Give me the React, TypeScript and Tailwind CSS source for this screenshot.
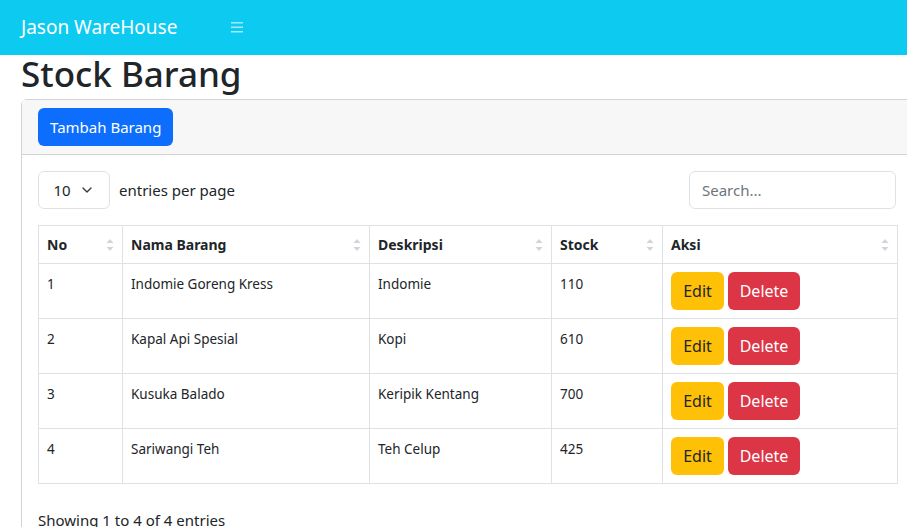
import { ChevronDown } from 'lucide-react';

const rows = [
  { no: 1, nama: 'Indomie Goreng Kress', desk: 'Indomie', stock: 110 },
  { no: 2, nama: 'Kapal Api Spesial', desk: 'Kopi', stock: 610 },
  { no: 3, nama: 'Kusuka Balado', desk: 'Keripik Kentang', stock: 700 },
  { no: 4, nama: 'Sariwangi Teh', desk: 'Teh Celup', stock: 425 },
];

const SortIcon = () => (
  <svg width="8" height="14" viewBox="0 0 8 14" className="shrink-0">
    <path d="M4 1 L7.5 5 L0.5 5 Z" fill="#d1d5db" />
    <path d="M4 13 L7.5 9 L0.5 9 Z" fill="#d1d5db" />
  </svg>
);

const Th = ({ label }: { label: string }) => (
  <th className="border border-[#dee2e6] px-2 h-[38px] text-left text-[14px] font-bold text-[#212529]">
    <div className="flex items-center justify-between">
      <span>{label}</span>
      <SortIcon />
    </div>
  </th>
);

export default function App() {
  return (
    <div className="w-[907px] overflow-x-hidden min-h-[527px] bg-white text-[#212529]" style={{ fontFamily: '"Noto Sans", "Open Sans", sans-serif' }}>
      <nav className="h-[55px] bg-[#0dcaf0] flex items-center px-[21px]">
        <span className="text-white text-[19px] w-[210px]">Jason WareHouse</span>
        <svg width="12" height="11" viewBox="0 0 12 11" className="mt-[-1px]">
          <rect x="0" y="0" width="12" height="1.5" fill="#a5e9f9" />
          <rect x="0" y="4.5" width="12" height="1.5" fill="#a5e9f9" />
          <rect x="0" y="9" width="12" height="1.5" fill="#a5e9f9" />
        </svg>
      </nav>

      <div className="pl-[21px]">
        <h1 className="text-[35px] font-medium leading-[40px] mt-[-1px] mb-[5px]">Stock Barang</h1>

        <div className="w-[893px] border border-[#d3d3d3] rounded-[6px]">
          <div className="bg-[#f7f7f7] border-b border-[#d3d3d3] px-4 py-2">
            <button className="bg-[#0d6efd] text-white text-[15px] rounded-[6px] h-[38px] px-3">Tambah Barang</button>
          </div>

          <div className="p-4">
            <div className="flex items-center justify-between w-[858px]">
              <div className="flex items-center gap-[9px]">
                <div className="w-[72px] h-[38px] border border-[#dee2e6] rounded-[6px] flex items-center justify-center gap-2 text-[15px]">
                  <span>10</span>
                  <ChevronDown size={16} strokeWidth={2} className="text-[#343a40]" />
                </div>
                <span className="text-[15px]">entries per page</span>
              </div>
              <div className="w-[207px] h-[38px] border border-[#dee2e6] rounded-[6px] flex items-center px-3 text-[15px] text-[#6c757d]">Search...</div>
            </div>

            <table className="mt-4 w-[859px] table-fixed border-collapse text-[13.5px]">
              <colgroup>
                <col className="w-[84px]" />
                <col className="w-[247px]" />
                <col className="w-[182px]" />
                <col className="w-[111px]" />
                <col className="w-[235px]" />
              </colgroup>
              <thead>
                <tr>
                  <Th label="No" />
                  <Th label="Nama Barang" />
                  <Th label="Deskripsi" />
                  <Th label="Stock" />
                  <Th label="Aksi" />
                </tr>
              </thead>
              <tbody>
                {rows.map((r) => (
                  <tr key={r.no} className="h-[55px] align-top">
                    <td className="border border-[#dee2e6] px-2 pt-[10px]">{r.no}</td>
                    <td className="border border-[#dee2e6] px-2 pt-[10px]">{r.nama}</td>
                    <td className="border border-[#dee2e6] px-2 pt-[10px]">{r.desk}</td>
                    <td className="border border-[#dee2e6] px-2 pt-[10px]">{r.stock}</td>
                    <td className="border border-[#dee2e6] px-2 pt-2">
                      <div className="flex gap-1">
                        <button className="bg-[#ffc107] text-[#212529] text-[16px] rounded-[6px] h-[38px] w-[53px]">Edit</button>
                        <button className="bg-[#dc3545] text-white text-[16px] rounded-[6px] h-[38px] w-[72px]">Delete</button>
                      </div>
                    </td>
                  </tr>
                ))}
              </tbody>
            </table>

            <p className="mt-[25px] text-[15px]">Showing 1 to 4 of 4 entries</p>
          </div>
        </div>
      </div>
    </div>
  );
}
